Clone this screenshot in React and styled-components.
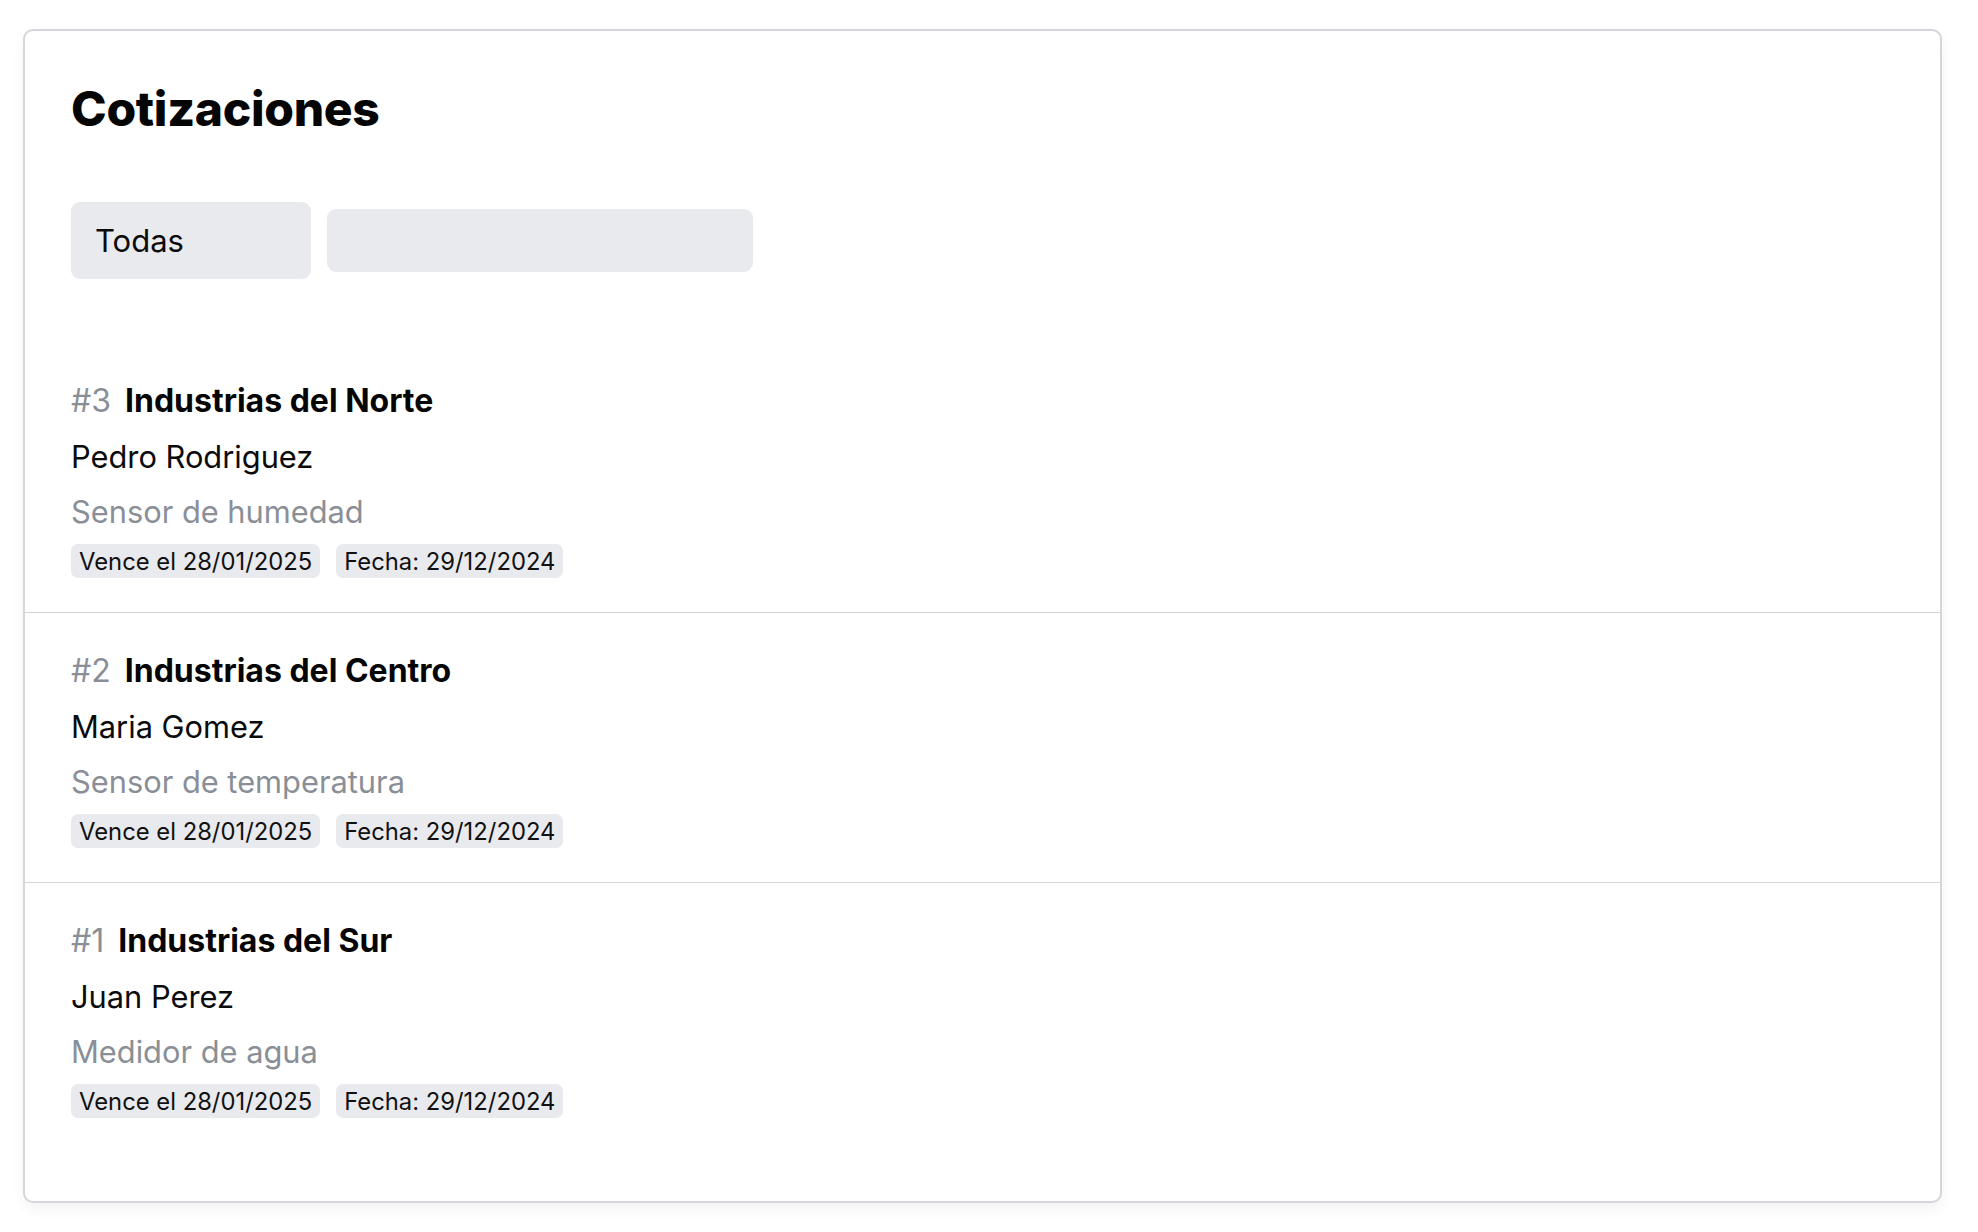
import React from "react";
import styled, { createGlobalStyle } from "styled-components";

const Global = createGlobalStyle`
  html, body { margin: 0; padding: 0; background: #ffffff; }
  body { font-family: Inter, "Noto Sans", "Liberation Sans", sans-serif; color: #0b0b0c; }
  * { box-sizing: border-box; }
`;

const Page = styled.div`
  padding: 29px 36px 30px 23px;
`;

const Card = styled.section`
  border: 2px solid #d3d6db;
  border-radius: 10px;
  background: #fff;
  box-shadow: 0 6px 14px rgba(0, 0, 0, 0.05);
  padding: 0 0 49px;
`;

const Header = styled.header`
  padding: 49px 46px 0;
`;

const Title = styled.h1`
  margin: 0;
  font-size: 48px;
  line-height: 58px;
  font-weight: 800;
  letter-spacing: -0.3px;
  color: #050505;
`;

const Filters = styled.div`
  display: flex;
  align-items: center;
  gap: 16px;
  margin-top: 64px;
  margin-bottom: 64px;
`;

const Select = styled.div`
  width: 240px;
  height: 77px;
  border-radius: 9px;
  background: #e9eaee;
  display: flex;
  align-items: center;
  padding: 0 24px;
  font-size: 31px;
  color: #0b0b0c;
`;

const Search = styled.div`
  width: 426px;
  height: 63px;
  border-radius: 9px;
  background: #e9eaee;
`;

const List = styled.ul`
  list-style: none;
  margin: 0;
  padding: 0;
`;

const Item = styled.li`
  padding: 34px 46px;
  border-top: ${(p) => (p.$first ? "none" : "1.5px solid #d3d6db")};
  display: flex;
  flex-direction: column;
  gap: 11px;
`;

const Heading = styled.div`
  display: flex;
  align-items: center;
  gap: 14px;
  height: 46px;
`;

const Num = styled.span`
  font-size: 32px;
  color: #8a8f97;
`;

const Company = styled.span`
  font-size: 32px;
  font-weight: 700;
  color: #050505;
`;

const Line = styled.div`
  height: 44px;
  display: flex;
  align-items: center;
  font-size: 30.8px;
  color: ${(p) => (p.$muted ? "#8a8f97" : "#0b0b0c")};
`;

const Chips = styled.div`
  display: flex;
  gap: 16px;
`;

const Chip = styled.span`
  height: 34px;
  display: inline-flex;
  align-items: center;
  padding: 0 8px;
  border-radius: 7px;
  background: #e9eaee;
  font-size: 23.8px;
  color: #111;
`;

const quotes = [
  { n: 3, company: "Industrias del Norte", contact: "Pedro Rodriguez", product: "Sensor de humedad" },
  { n: 2, company: "Industrias del Centro", contact: "Maria Gomez", product: "Sensor de temperatura" },
  { n: 1, company: "Industrias del Sur", contact: "Juan Perez", product: "Medidor de agua" },
];

export default function App() {
  return (
    <Page>
      <Global />
      <Card>
        <Header>
          <Title>Cotizaciones</Title>
          <Filters>
            <Select>Todas</Select>
            <Search />
          </Filters>
        </Header>
        <List>
          {quotes.map((q, i) => (
            <Item key={q.n} $first={i === 0}>
              <Heading>
                <Num>#{q.n}</Num>
                <Company>{q.company}</Company>
              </Heading>
              <Line>{q.contact}</Line>
              <Line $muted>{q.product}</Line>
              <Chips>
                <Chip>Vence el 28/01/2025</Chip>
                <Chip>Fecha: 29/12/2024</Chip>
              </Chips>
            </Item>
          ))}
        </List>
      </Card>
    </Page>
  );
}
